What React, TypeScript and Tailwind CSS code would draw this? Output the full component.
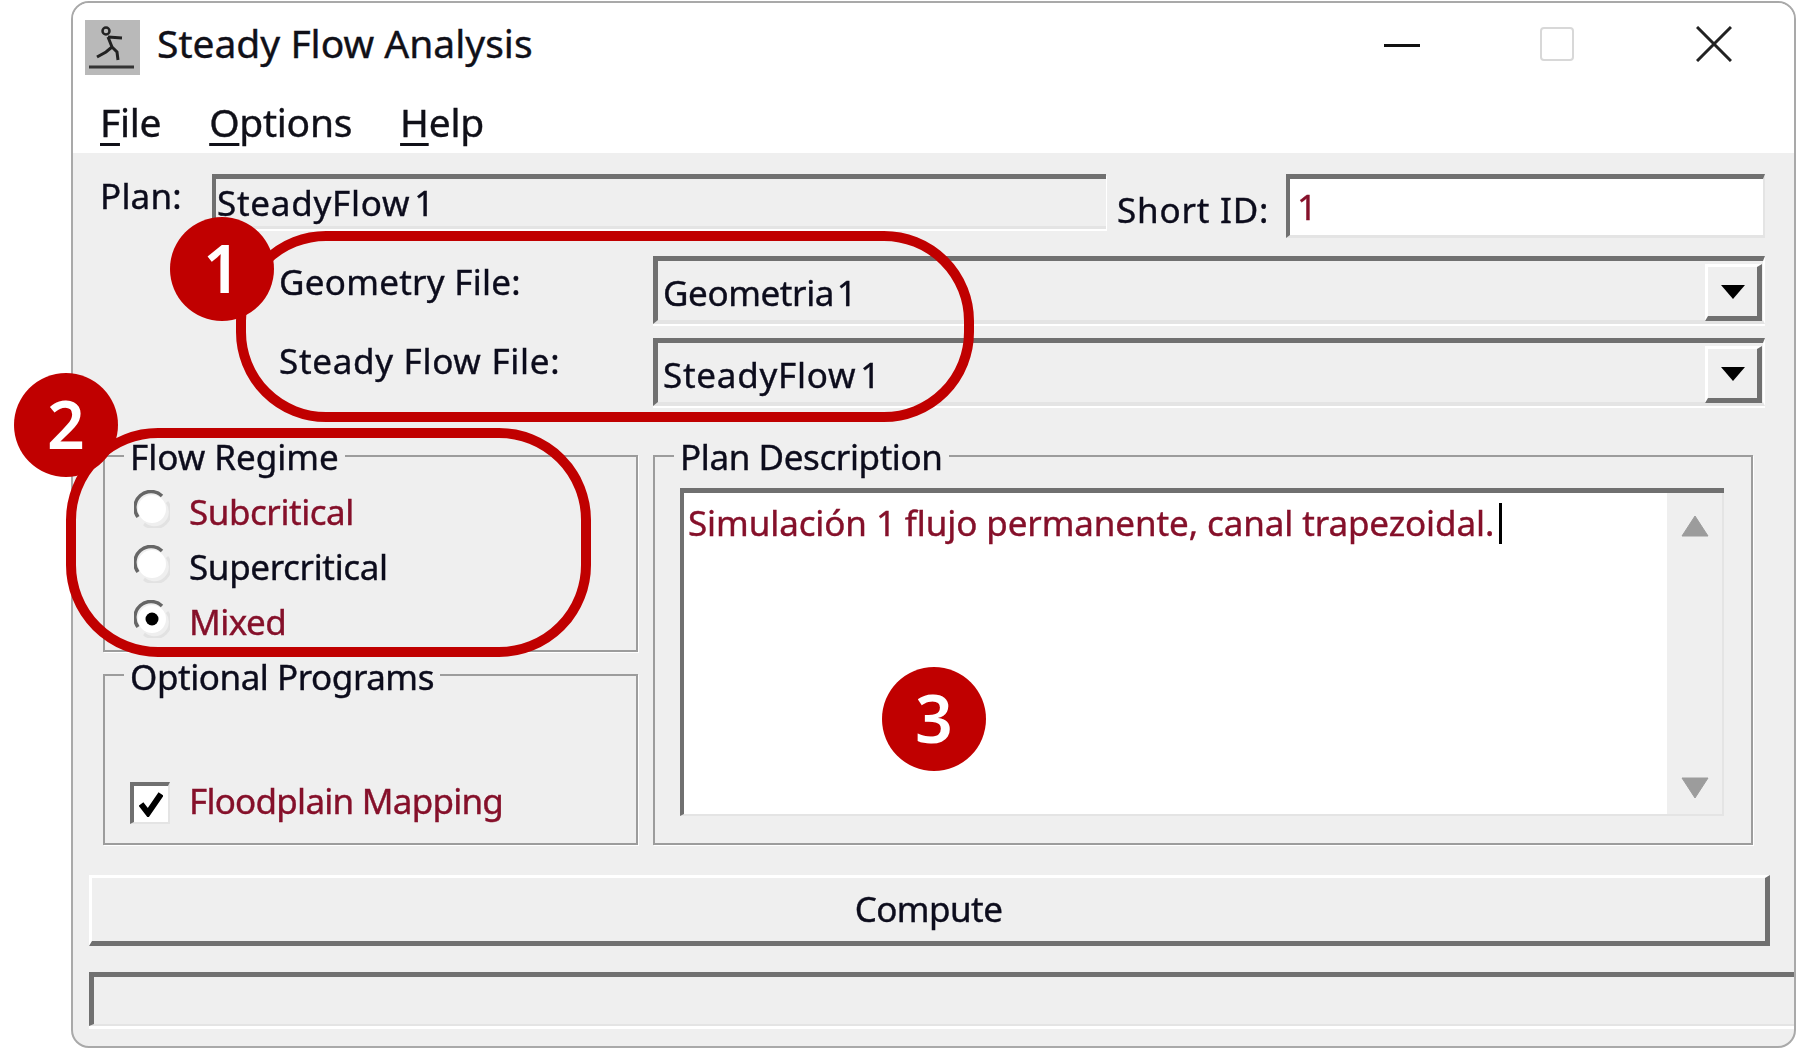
import React from "react";

const Arrow = () => (
  <svg width="26" height="16" viewBox="0 0 26 16"><path d="M1 1H25L13 15Z" fill="#000" /></svg>
);

const Combo = ({ text, cls }: { text: string; cls: string }) => (
  <div className="flex-1 h-[68px] flex border-t-[5px] border-l-[5px] border-t-[#707070] border-l-[#707070] border-b-[4px] border-b-[#e4e4e4] border-r-[2px] border-r-white shadow-[0_2px_0_#fff]">
    <div className={cls}>{text}</div>
    <div className="w-[57px] h-[57px] mt-[3px] mr-[1px] flex items-center justify-center border-t-[3px] border-l-[3px] border-t-white border-l-white border-r-[5px] border-b-[5px] border-r-[#707070] border-b-[#707070]">
      <Arrow />
    </div>
  </div>
);

const Radio = ({ label, on, cls }: { label: string; on?: boolean; cls: string }) => (
  <div className="h-[55px] flex items-center gap-[19px]">
    <svg width="36" height="38" viewBox="0 0 36 38" className="mb-[8px] shrink-0">
      <circle cx="18" cy="19" r="14" fill="#fff" />
      <path d="M4 27A16 16 0 0 1 28 6" fill="none" stroke="#666" strokeWidth="3.5" />
      <path d="M33 12A16 16 0 0 1 10 34" fill="none" stroke="#e2e2e2" strokeWidth="3" />
      {on && <circle cx="18" cy="19" r="6.5" fill="#000" />}
    </svg>
    <span className={cls}>{label}</span>
  </div>
);

const Marker = ({ n, cls }: { n: string; cls: string }) => (
  <div className={cls}>{n}</div>
);

export default function App() {
  return (
    <div className="relative w-full h-[1049px] bg-white overflow-hidden font-['Noto_Sans',sans-serif]">
      <div className="blur-[0.7px] [-webkit-text-stroke:0.4px] ml-[71px] mt-[1px] w-[1725px] h-[1047px] flex flex-col rounded-[18px] border-2 border-[#a9a9a9] bg-[#efefef] overflow-hidden text-[#0c0c1c]">
        <div className="bg-white h-[150px] flex flex-col shrink-0">
          <div className="h-[82px] flex items-center pl-[12px]">
            <div className="w-[55px] h-[55px] bg-[#b9b9b9] mt-[6px] shrink-0">
              <svg width="55" height="55" viewBox="0 0 55 55" fill="none" stroke="#222" strokeWidth="3">
                <circle cx="21" cy="11" r="3.5" strokeWidth="2.5" />
                <path d="M23 17L27 27L21 32L12 37M27 27L32 32L33 40M23 17L37 18" />
                <path d="M4 47H49" strokeWidth="3" stroke="#333" />
              </svg>
            </div>
            <span className="ml-[17px] mb-[2px] text-[39px] text-[#101018]">Steady Flow Analysis</span>
            <div className="ml-auto flex items-center mr-[62px]">
              <svg width="36" height="4" viewBox="0 0 36 4" className="mt-[4px]"><rect width="36" height="3" fill="#111" /></svg>
              <svg width="34" height="34" viewBox="0 0 34 34" className="ml-[120px]"><rect x="1" y="1" width="32" height="32" rx="3" fill="#fff" stroke="#d8d8d8" strokeWidth="2" /></svg>
              <svg width="36" height="36" viewBox="0 0 36 36" className="ml-[122px]"><path d="M1 1L35 35M35 1L1 35" stroke="#222" strokeWidth="3" /></svg>
            </div>
          </div>
          <div className="flex pl-[27px] gap-[48px] text-[39px] tracking-[-0.3px] leading-[50px] pt-[12px] text-[#101018]">
            <span><u className="decoration-[3px] underline-offset-[6px]">F</u>ile</span>
            <span><u className="decoration-[3px] underline-offset-[6px]">O</u>ptions</span>
            <span><u className="decoration-[3px] underline-offset-[6px]">H</u>elp</span>
          </div>
        </div>

        <div className="flex-1 flex flex-col pl-[16px] pr-[29px] pt-[21px]">
          <div className="flex h-[64px]">
            <span className="ml-[11px] w-[112px] text-[35px] leading-[44px] tracking-[0.2px]">Plan:</span>
            <div className="w-[894px] h-[55px] border-t-[5px] border-l-[4px] border-t-[#707070] border-l-[#707070] border-b-[3px] border-b-[#e4e4e4] pl-[1px] text-[35px] leading-[48px] tracking-[0.75px] [word-spacing:-6px] shadow-[1px_2px_0_#fff]">SteadyFlow 1</div>
            <span className="ml-[11px] w-[169px] text-[35px] leading-[72px] tracking-[0.8px] whitespace-nowrap">Short ID:</span>
            <div className="flex-1 bg-white border-t-[5px] border-l-[4px] border-t-[#707070] border-l-[#707070] border-b-[3px] border-r-2 border-b-[#e4e4e4] border-r-[#e4e4e4] pl-[7px] text-[35px] leading-[56px] text-[#85102a]">1</div>
          </div>

          <div className="flex mt-[18px]">
            <span className="ml-[190px] w-[374px] text-[35px] leading-[52px] tracking-[0.26px]">Geometry File:</span>
            <Combo text="Geometria 1" cls="flex-1 pl-[5px] text-[35px] leading-[64px] tracking-[-0.4px] [word-spacing:-6px] text-[#0c0c1c]" />
          </div>
          <div className="flex mt-[14px]">
            <span className="ml-[190px] w-[374px] text-[35px] leading-[36px] pt-[5px] tracking-[0.7px]">Steady Flow File:</span>
            <Combo text="SteadyFlow 1" cls="flex-1 pl-[5px] text-[35px] leading-[64px] tracking-[0.75px] [word-spacing:-6px] text-[#0c0c1c]" />
          </div>

          <div className="flex gap-[15px] mt-[32px] ml-[14px] mr-[12px]">
            <div className="w-[535px] flex flex-col gap-[5px] shrink-0">
              <fieldset className="h-[214px] border-2 border-[#9c9c9c] pl-[29px] shadow-[1px_1px_0_#fff]">
                <legend className="-ml-[10px] px-[6px] text-[35px] leading-[36px] translate-y-[1px]">Flow Regime</legend>
                <div className="mt-[11px]">
                  <Radio label="Subcritical" cls="text-[35px] tracking-[-0.45px] text-[#85102a]" />
                  <Radio label="Supercritical" cls="text-[35px] tracking-[-0.35px] text-[#0c0c1c]" />
                  <Radio label="Mixed" on cls="text-[35px] tracking-[-0.5px] text-[#85102a]" />
                </div>
              </fieldset>
              <fieldset className="h-[188px] border-2 border-[#9c9c9c] pl-[25px] shadow-[1px_1px_0_#fff]">
                <legend className="-ml-[6px] px-[6px] text-[35px] leading-[36px] tracking-[-0.45px] translate-y-[2px]">Optional Programs</legend>
                <div className="flex items-center gap-[19px] mt-[82px]">
                  <div className="w-[40px] h-[42px] flex items-center justify-center bg-white border-t-[4px] border-l-[4px] border-t-[#707070] border-l-[#707070] border-b-2 border-r-2 border-b-[#e4e4e4] border-r-[#e4e4e4] shrink-0">
                    <svg width="24" height="26" viewBox="0 0 24 26"><path d="M2 13L9 22L22 3" fill="none" stroke="#000" strokeWidth="6" /></svg>
                  </div>
                  <span className="mb-[4px] text-[35px] tracking-[-0.75px] text-[#85102a] whitespace-nowrap">Floodplain Mapping</span>
                </div>
              </fieldset>
            </div>

            <fieldset className="flex-1 h-[407px] border-2 border-[#9c9c9c] pl-[25px] pr-[27px] shadow-[1px_1px_0_#fff]">
              <legend className="-ml-[6px] px-[6px] text-[35px] leading-[36px] tracking-[-0.4px] translate-y-[1px]">Plan Description</legend>
              <div className="h-[328px] mt-[14px] flex bg-white border-t-[5px] border-l-[4px] border-t-[#707070] border-l-[#707070] border-b-2 border-b-[#e4e4e4]">
                <div className="flex-1 pl-[4px] pt-[5px] flex items-start text-[#85102a]">
                  <span className="text-[35px] leading-[50px] tracking-[-0.1px] whitespace-nowrap">Simulación 1 flujo permanente, canal trapezoidal.</span>
                  <div className="w-[3px] h-[41px] bg-black ml-[5px] mt-[5px]"></div>
                </div>
                <div className="w-[57px] bg-[#efefef] flex flex-col items-center justify-between pt-[22px] pb-[15px] border-r-2 border-r-[#e4e4e4]">
                  <svg width="28" height="22" viewBox="0 0 28 22"><path d="M14 1L27 21H1Z" fill="#9c9c9c" stroke="#9c9c9c" strokeLinejoin="round" /></svg>
                  <svg width="28" height="22" viewBox="0 0 28 22"><path d="M14 21L27 1H1Z" fill="#9c9c9c" stroke="#9c9c9c" strokeLinejoin="round" /></svg>
                </div>
              </div>
            </fieldset>
          </div>

          <div className="mt-[30px] h-[71px] -mr-[5px] flex items-center justify-center border-t-[3px] border-l-[3px] border-t-white border-l-white border-r-[5px] border-b-[5px] border-r-[#707070] border-b-[#707070] text-[35px] tracking-[-0.55px]">Compute</div>
          <div className="mt-[26px] h-[54px] -mr-[29px] border-t-[5px] border-l-[5px] border-t-[#707070] border-l-[#707070] border-b-2 border-b-[#e4e4e4] shadow-[0_3px_0_#fff]"></div>
        </div>
      </div>

      <div className="absolute left-[236px] top-[231px] w-[738px] h-[191px] rounded-[90px] border-[10px] border-[#c00000]"></div>
      <div className="absolute left-[66px] top-[428px] w-[525px] h-[229px] rounded-[92px] border-[10px] border-[#c00000]"></div>
      <Marker n="1" cls="absolute left-[170px] top-[217px] w-[104px] h-[104px] pb-[3px] rounded-full bg-[#c00000] text-white flex items-center justify-center text-[66px] font-semibold" />
      <Marker n="2" cls="absolute left-[14px] top-[373px] w-[104px] h-[104px] pb-[3px] rounded-full bg-[#c00000] text-white flex items-center justify-center text-[66px] font-semibold" />
      <Marker n="3" cls="absolute left-[882px] top-[667px] w-[104px] h-[104px] pb-[3px] rounded-full bg-[#c00000] text-white flex items-center justify-center text-[66px] font-semibold" />
    </div>
  );
}
